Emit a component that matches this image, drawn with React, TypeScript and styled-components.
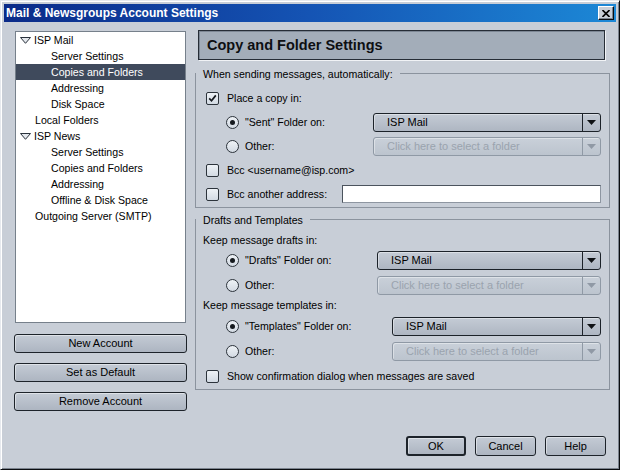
import React from 'react';
import styled, { createGlobalStyle } from 'styled-components';

const BG = '#c8ced7';

const GlobalStyle = createGlobalStyle`
  html, body { margin: 0; padding: 0; }
  body {
    font-family: "Liberation Sans", Arial, sans-serif;
    font-size: 10.6px;
    color: #000;
    background: ${BG};
  }
  * { box-sizing: border-box; }
`;

const Window = styled.div`
  width: 620px;
  height: 470px;
  display: flex;
  flex-direction: column;
  background: ${BG};
  border: 1px solid;
  border-color: #e6e9ee #0b0d10 #0b0d10 #e6e9ee;
  box-shadow: inset 1px 1px 0 #ffffff, inset -1px -1px 0 #7b838e;
  padding: 3px;
`;

const TitleBar = styled.div`
  height: 18px;
  display: flex;
  align-items: center;
  padding: 0 2px 0 2px;
  background: linear-gradient(to right, #0a2a88 0%, #1554b4 50%, #1c88d6 100%);
  color: #fff;
  font-weight: bold;
  font-size: 12px;
  white-space: nowrap;
`;

const CloseButton = styled.div`
  width: 16px;
  height: 14px;
  margin-left: auto;
  background: ${BG};
  border: 1px solid;
  border-color: #ffffff #0b0d10 #0b0d10 #ffffff;
  box-shadow: inset -1px -1px 0 #7b838e;
  display: flex;
  align-items: center;
  justify-content: center;
`;

const Body = styled.div`
  flex: 1;
  display: flex;
  flex-direction: column;
  padding: 8px 6px 10px 10px;
`;

const Main = styled.div`
  display: flex;
  align-items: flex-start;
  gap: 8px;
`;

const LeftCol = styled.div`
  width: 173px;
  display: flex;
  flex-direction: column;
`;

const Tree = styled.div`
  margin: 1px 1px 0 1px;
  height: 292px;
  background: #fff;
  border: 1px solid #76808b;
  display: flex;
  flex-direction: column;
`;

const TreeRow = styled.div<{ $pl: number; $selected?: boolean }>`
  height: 16px;
  display: flex;
  align-items: center;
  gap: 3px;
  padding-left: ${(p) => p.$pl}px;
  background: ${(p) => (p.$selected ? '#3f4a5c' : 'transparent')};
  color: ${(p) => (p.$selected ? '#fff' : '#000')};
  white-space: nowrap;
`;

const LeftButtons = styled.div`
  margin-top: 11px;
  display: flex;
  flex-direction: column;
  gap: 10px;
`;

const PushButton = styled.button<{ $w?: number; $h?: number; $default?: boolean }>`
  width: ${(p) => (p.$w ? `${p.$w}px` : '100%')};
  height: ${(p) => p.$h ?? 19}px;
  padding: 0;
  font-family: inherit;
  font-size: 11px;
  color: #000;
  border: ${(p) => (p.$default ? 2 : 1)}px solid #1d232a;
  border-radius: 3px;
  background: linear-gradient(#c4cbd5, #adb5c1);
  box-shadow: inset 1px 1px 0 rgba(255, 255, 255, 0.45);
  text-align: center;
  line-height: 1;
`;

const RightCol = styled.div`
  width: 415px;
  display: flex;
  flex-direction: column;
`;

const Header = styled.div`
  height: 30px;
  margin: 0 5px 0 3px;
  background: #a3adb9;
  border: 1px solid #262d36;
  box-shadow: 1px 1px 0 #f1f3f6, inset 1px 1px 0 #7d8794;
  display: flex;
  align-items: center;
  padding-left: 8px;
  font-weight: bold;
  font-size: 14.5px;
  color: #0d0f12;
`;

const GroupBox = styled.div<{ $mt: number; $pb: number }>`
  margin-top: ${(p) => p.$mt}px;
  border: 1px solid #8b939e;
  display: flex;
  flex-direction: column;
  padding-bottom: ${(p) => p.$pb}px;
`;

const GroupLabel = styled.div`
  align-self: flex-start;
  margin-top: -7px;
  height: 14px;
  line-height: 14px;
  padding: 0 7px;
  background: ${BG};
  white-space: nowrap;
`;

const Rows = styled.div<{ $mt: number; $gap?: number }>`
  margin-top: ${(p) => p.$mt}px;
  display: flex;
  flex-direction: column;
  gap: ${(p) => p.$gap ?? 0}px;
`;

const Row = styled.div<{ $pl: number; $mt?: number }>`
  height: 20px;
  margin-top: ${(p) => p.$mt ?? 0}px;
  display: flex;
  align-items: center;
  padding-left: ${(p) => p.$pl}px;
  padding-right: 8px;
  white-space: nowrap;
`;

const CheckBox = styled.span`
  width: 13px;
  height: 13px;
  flex-shrink: 0;
  border: 1px solid #2c333b;
  border-radius: 2px;
  background: linear-gradient(#eef2f6, #d3dae3);
  display: flex;
  align-items: center;
  justify-content: center;
  margin-right: 8px;
`;

const RadioBox = styled.span`
  width: 13px;
  height: 13px;
  flex-shrink: 0;
  border: 1px solid #2c333b;
  border-radius: 50%;
  background: linear-gradient(#eef2f6, #d3dae3);
  display: flex;
  align-items: center;
  justify-content: center;
  margin-right: 6px;
`;

const RadioDot = styled.span`
  width: 5px;
  height: 5px;
  border-radius: 50%;
  background: #15191e;
`;

const FieldLabel = styled.span<{ $w?: number }>`
  width: ${(p) => (p.$w ? `${p.$w}px` : 'auto')};
  flex-shrink: 0;
`;

const Select = styled.div<{ $disabled?: boolean }>`
  flex: 1;
  height: 19px;
  display: flex;
  border: 1px solid ${(p) => (p.$disabled ? '#8f99a5' : '#1c2229')};
  border-radius: 3px;
  background: ${(p) =>
    p.$disabled ? 'linear-gradient(#c9d0d9, #bcc4ce)' : 'linear-gradient(#c4cbd5, #aeb6c2)'};
  color: ${(p) => (p.$disabled ? '#9aa3ae' : '#000')};
  box-shadow: inset 1px 1px 0 rgba(255, 255, 255, 0.4);
`;

const SelectText = styled.span`
  flex: 1;
  padding-left: 13px;
  line-height: 17px;
  font-size: 11px;
  overflow: hidden;
`;

const SelectArrow = styled.span<{ $disabled?: boolean }>`
  width: 18px;
  border-left: 1px solid ${(p) => (p.$disabled ? '#8f99a5' : '#1c2229')};
  display: flex;
  align-items: center;
  justify-content: center;
`;

const TextInput = styled.div`
  flex: 1;
  height: 18px;
  background: #fff;
  border: 1px solid;
  border-color: #4b535d #8e96a1 #8e96a1 #4b535d;
`;

const Footer = styled.div`
  margin-top: auto;
  display: flex;
  justify-content: flex-end;
  gap: 9px;
  padding-right: 4px;
`;

const Check = ({ checked }: { checked?: boolean }) => (
  <CheckBox>
    {checked && (
      <svg width="9" height="9" viewBox="0 0 9 9">
        <path d="M1.2 4.4 L3.5 6.8 L7.8 1.4" fill="none" stroke="#161a1f" strokeWidth="1.7" />
      </svg>
    )}
  </CheckBox>
);

const Radio = ({ checked }: { checked?: boolean }) => <RadioBox>{checked && <RadioDot />}</RadioBox>;

const Dropdown = ({ text, disabled }: { text: string; disabled?: boolean }) => (
  <Select $disabled={disabled}>
    <SelectText>{text}</SelectText>
    <SelectArrow $disabled={disabled}>
      <svg width="9" height="5" viewBox="0 0 9 5">
        <polygon points="0,0 9,0 4.5,5" fill={disabled ? '#9099a5' : '#0f1215'} />
      </svg>
    </SelectArrow>
  </Select>
);

const Twisty = () => (
  <svg width="11" height="7" viewBox="0 0 11 7">
    <polygon points="0.5,0.5 10.5,0.5 5.5,6.3" fill="#e4e8ed" stroke="#2a323c" strokeWidth="1" />
  </svg>
);

type TreeItem = { label: string; level: 0 | 1; open?: boolean; selected?: boolean };

const treeItems: TreeItem[] = [
  { label: 'ISP Mail', level: 0, open: true },
  { label: 'Server Settings', level: 1 },
  { label: 'Copies and Folders', level: 1, selected: true },
  { label: 'Addressing', level: 1 },
  { label: 'Disk Space', level: 1 },
  { label: 'Local Folders', level: 0 },
  { label: 'ISP News', level: 0, open: true },
  { label: 'Server Settings', level: 1 },
  { label: 'Copies and Folders', level: 1 },
  { label: 'Addressing', level: 1 },
  { label: 'Offline & Disk Space', level: 1 },
  { label: 'Outgoing Server (SMTP)', level: 0 },
];

export default function App() {
  return (
    <>
      <GlobalStyle />
      <Window>
        <TitleBar>
          <span>{'Mail & Newsgroups Account Settings'}</span>
          <CloseButton>
            <svg width="8" height="7" viewBox="0 0 8 7">
              <path d="M0.5 0 L7.5 7 M7.5 0 L0.5 7" stroke="#000" strokeWidth="1.6" />
            </svg>
          </CloseButton>
        </TitleBar>
        <Body>
          <Main>
            <LeftCol>
              <Tree>
                {treeItems.map((it, i) => (
                  <TreeRow
                    key={i}
                    $pl={it.level === 1 ? 35 : it.open ? 4 : 19}
                    $selected={it.selected}
                  >
                    {it.open && <Twisty />}
                    <span>{it.label}</span>
                  </TreeRow>
                ))}
              </Tree>
              <LeftButtons>
                <PushButton>New Account</PushButton>
                <PushButton>Set as Default</PushButton>
                <PushButton>Remove Account</PushButton>
              </LeftButtons>
            </LeftCol>
            <RightCol>
              <Header>Copy and Folder Settings</Header>
              <GroupBox $mt={13} $pb={3}>
                <GroupLabel>When sending messages, automatically:</GroupLabel>
                <Rows $mt={7} $gap={4}>
                  <Row $pl={10}>
                    <Check checked />
                    <FieldLabel>Place a copy in:</FieldLabel>
                  </Row>
                  <Row $pl={30}>
                    <Radio checked />
                    <FieldLabel $w={128}>"Sent" Folder on:</FieldLabel>
                    <Dropdown text="ISP Mail" />
                  </Row>
                  <Row $pl={30}>
                    <Radio />
                    <FieldLabel $w={128}>Other:</FieldLabel>
                    <Dropdown text="Click here to select a folder" disabled />
                  </Row>
                  <Row $pl={10}>
                    <Check />
                    <FieldLabel>{'Bcc <username@isp.com>'}</FieldLabel>
                  </Row>
                  <Row $pl={10}>
                    <Check />
                    <FieldLabel $w={115}>Bcc another address:</FieldLabel>
                    <TextInput />
                  </Row>
                </Rows>
              </GroupBox>
              <GroupBox $mt={11} $pb={3}>
                <GroupLabel>Drafts and Templates</GroupLabel>
                <Rows $mt={3}>
                  <Row $pl={7}>
                    <FieldLabel>Keep message drafts in:</FieldLabel>
                  </Row>
                  <Row $pl={30}>
                    <Radio checked />
                    <FieldLabel $w={132}>"Drafts" Folder on:</FieldLabel>
                    <Dropdown text="ISP Mail" />
                  </Row>
                  <Row $pl={30} $mt={5}>
                    <Radio />
                    <FieldLabel $w={132}>Other:</FieldLabel>
                    <Dropdown text="Click here to select a folder" disabled />
                  </Row>
                  <Row $pl={7}>
                    <FieldLabel>Keep message templates in:</FieldLabel>
                  </Row>
                  <Row $pl={30} $mt={1}>
                    <Radio checked />
                    <FieldLabel $w={147}>"Templates" Folder on:</FieldLabel>
                    <Dropdown text="ISP Mail" />
                  </Row>
                  <Row $pl={30} $mt={5}>
                    <Radio />
                    <FieldLabel $w={147}>Other:</FieldLabel>
                    <Dropdown text="Click here to select a folder" disabled />
                  </Row>
                  <Row $pl={10} $mt={5}>
                    <Check />
                    <FieldLabel>Show confirmation dialog when messages are saved</FieldLabel>
                  </Row>
                </Rows>
              </GroupBox>
            </RightCol>
          </Main>
          <Footer>
            <PushButton $w={60} $h={20} $default>
              OK
            </PushButton>
            <PushButton $w={61} $h={20}>
              Cancel
            </PushButton>
            <PushButton $w={61} $h={20}>
              Help
            </PushButton>
          </Footer>
        </Body>
      </Window>
    </>
  );
}
